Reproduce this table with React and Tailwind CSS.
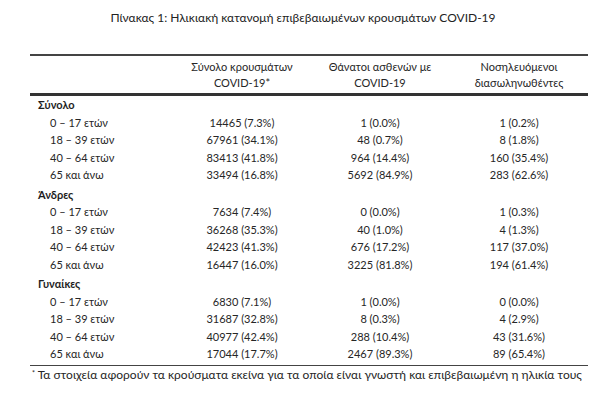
import React from 'react';

const sections = [
  {
    title: 'Σύνολο',
    rows: [
      ['0 – 17 ετών', '14465 (7.3%)', '1 (0.0%)', '1 (0.2%)'],
      ['18 – 39 ετών', '67961 (34.1%)', '48 (0.7%)', '8 (1.8%)'],
      ['40 – 64 ετών', '83413 (41.8%)', '964 (14.4%)', '160 (35.4%)'],
      ['65 και άνω', '33494 (16.8%)', '5692 (84.9%)', '283 (62.6%)'],
    ],
  },
  {
    title: 'Άνδρες',
    rows: [
      ['0 – 17 ετών', '7634 (7.4%)', '0 (0.0%)', '1 (0.3%)'],
      ['18 – 39 ετών', '36268 (35.3%)', '40 (1.0%)', '4 (1.3%)'],
      ['40 – 64 ετών', '42423 (41.3%)', '676 (17.2%)', '117 (37.0%)'],
      ['65 και άνω', '16447 (16.0%)', '3225 (81.8%)', '194 (61.4%)'],
    ],
  },
  {
    title: 'Γυναίκες',
    rows: [
      ['0 – 17 ετών', '6830 (7.1%)', '1 (0.0%)', '0 (0.0%)'],
      ['18 – 39 ετών', '31687 (32.8%)', '8 (0.3%)', '4 (2.9%)'],
      ['40 – 64 ετών', '40977 (42.4%)', '288 (10.4%)', '43 (31.6%)'],
      ['65 και άνω', '17044 (17.7%)', '2467 (89.3%)', '89 (65.4%)'],
    ],
  },
];

const cols = 'grid grid-cols-[142px_140px_136px_142px]';

export default function App() {
  return (
    <div className="w-[606px] h-[400px] bg-white text-[#262626] font-['Lato','Noto_Sans',sans-serif] overflow-hidden">
      <h1 className="pt-[10px] text-center text-[12px] leading-[16px] text-[#222]">
        Πίνακας 1: Ηλικιακή κατανομή επιβεβαιωμένων κρουσμάτων COVID-19
      </h1>

      <div className="ml-[30px] w-[558px] mt-[28px]">
        <div className="h-[2px] bg-[#444]" />
        <div className={`${cols} pt-[3px] pb-[2px] text-[11px] leading-[16px] text-center`}>
          <div />
          <div>Σύνολο κρουσμάτων<br />COVID-19*</div>
          <div>Θάνατοι ασθενών με<br />COVID-19</div>
          <div>Νοσηλευόμενοι<br />διασωληνωθέντες</div>
        </div>
        <div className="h-[3px] bg-[#333]" />

        {sections.map((section, i) => (
          <div key={section.title} className={i > 0 ? 'mt-[2px]' : ''}>
            <div className="pl-[8px] text-[11px] leading-[17.5px] font-bold text-[#1e1e1e]">
              {section.title}
            </div>
            {section.rows.map((row) => (
              <div key={row[0]} className={`${cols} text-[11px] leading-[17.5px]`}>
                <div className="pl-[20px]">{row[0]}</div>
                <div className="text-center">{row[1]}</div>
                <div className="text-center">{row[2]}</div>
                <div className="text-center">{row[3]}</div>
              </div>
            ))}
          </div>
        ))}

        <div className="mt-[2px] h-[1.5px] bg-[#444]" />
        <p className="pt-[1px] text-[12px] leading-[16px] pl-[2px] whitespace-nowrap">
          <sup className="text-[7px]">*</sup> Τα στοιχεία αφορούν τα κρούσματα εκείνα για τα οποία είναι γνωστή και επιβεβαιωμένη η ηλικία τους
        </p>
      </div>
    </div>
  );
}
